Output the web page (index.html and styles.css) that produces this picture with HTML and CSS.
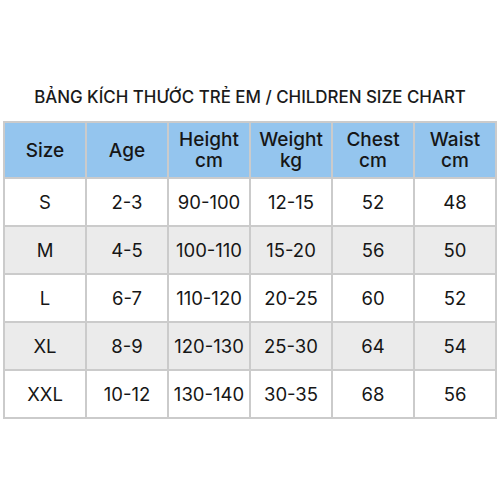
FILE: index.html
```html
<!DOCTYPE html>
<html>
<head>
<meta charset="utf-8">
<link rel="stylesheet" href="styles.css">
</head>
<body>
<div class="page">
  <h1 class="title">BẢNG KÍCH THƯỚC TRẺ EM / CHILDREN SIZE CHART</h1>
  <table class="chart">
    <thead>
      <tr>
        <th>Size</th>
        <th>Age</th>
        <th>Height<br>cm</th>
        <th>Weight<br>kg</th>
        <th>Chest<br>cm</th>
        <th>Waist<br>cm</th>
      </tr>
    </thead>
    <tbody>
      <tr><td>S</td><td>2-3</td><td>90-100</td><td>12-15</td><td>52</td><td>48</td></tr>
      <tr class="alt"><td>M</td><td>4-5</td><td>100-110</td><td>15-20</td><td>56</td><td>50</td></tr>
      <tr><td>L</td><td>6-7</td><td>110-120</td><td>20-25</td><td>60</td><td>52</td></tr>
      <tr class="alt"><td>XL</td><td>8-9</td><td>120-130</td><td>25-30</td><td>64</td><td>54</td></tr>
      <tr><td>XXL</td><td>10-12</td><td>130-140</td><td>30-35</td><td>68</td><td>56</td></tr>
    </tbody>
  </table>
</div>
</body>
</html>
```

FILE: styles.css
```css
html, body {
  margin: 0;
  padding: 0;
  background: #ffffff;
}

.page {
  width: 500px;
  height: 500px;
  padding: 0 3px;
  box-sizing: border-box;
  display: flex;
  flex-direction: column;
  font-family: Inter, "Open Sans", "DejaVu Sans", sans-serif;
  color: #161616;
}

.title {
  margin: 84px 0 0 0;
  height: 26px;
  line-height: 26px;
  font-size: 16.9px;
  font-weight: 500;
  text-align: center;
  letter-spacing: 0;
  white-space: nowrap;
  color: #1a1a1a;
}

.chart {
  margin-top: 11px;
  width: 494px;
  border-collapse: collapse;
  table-layout: fixed;
  border: 2px solid #cbcbcb;
}

.chart th,
.chart td {
  border: 2px solid #cbcbcb;
  text-align: center;
  vertical-align: middle;
  padding: 0;
}

.chart th {
  height: 54px;
  background: #94c5ee;
  font-size: 19px;
  font-weight: 500;
  line-height: 21px;
}

.chart td {
  height: 46px;
  font-size: 18.5px;
  font-weight: 400;
  background: #ffffff;
}

.chart tr.alt td {
  background: #ebebeb;
}
```
